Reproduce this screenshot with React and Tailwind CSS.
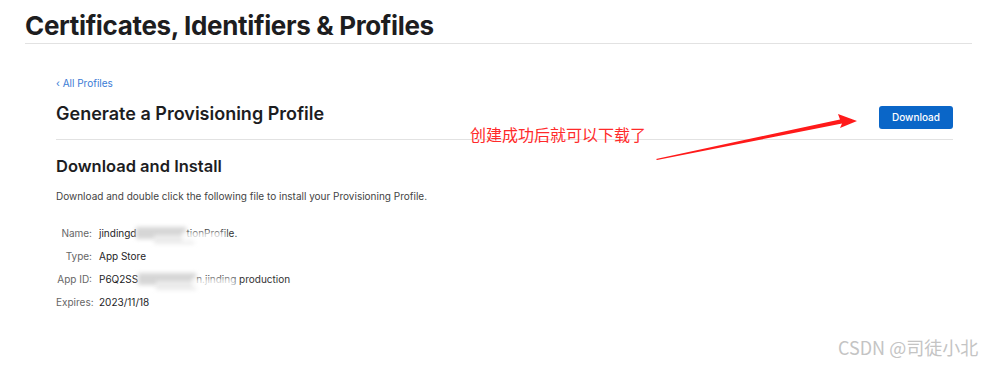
import React from "react";

const rows = [
  { label: "Name:", pre: "jindingd", blur: 50, post: "tionProfile." },
  { label: "Type:", pre: "App Store" },
  { label: "App ID:", pre: "P6Q2SS", blur: 58, post: "n.jinding production" },
  { label: "Expires:", pre: "2023/11/18" },
];

// smudged-out part of the value, like the screenshot's mosaic
const Blur = ({ width }) => (
  <span className="relative inline-block h-[14px] align-middle" style={{ width }}>
    <span className="absolute left-0 top-[1px] h-[12px] w-full bg-[#d6d6d6] blur-[2px]" />
    <span className="absolute left-[18px] top-[9px] h-[9px] w-[40px] bg-[#ebebeb] blur-[2px]" />
  </span>
);

const App = () => {
  return (
    <div
      className="relative w-[987px] h-[365px] overflow-hidden bg-white text-[#1d1d1f]"
      style={{ fontFamily: "Inter, 'Noto Sans', sans-serif" }}
    >
      <div className="pl-[25px] pr-[15px] pt-[10px]">
        <h1 className="text-[26px] leading-[32px] font-bold tracking-[-0.35px] text-[#1d1d1f]">
          Certificates, Identifiers &amp; Profiles
        </h1>
        <div className="mt-[1px] h-px bg-[#e2e2e2]" />
      </div>

      <div className="pl-[56px] pr-[34px] pt-[25px]">
        <a className="text-[10px] leading-[14px] text-[#3a7bd5]">‹ All Profiles</a>
        <div className="mt-[9px] flex items-start justify-between">
          <h2 className="text-[18px] leading-[24px] font-semibold">Generate a Provisioning Profile</h2>
          <button className="mt-[4px] h-[23px] w-[74px] rounded-[3px] bg-[#0a66c8] text-[10px] font-medium text-white">
            Download
          </button>
        </div>
        <div className="mt-[10px] h-px bg-[#e2e2e2]" />

        <h3 className="mt-[15px] text-[16.5px] leading-[22px] font-semibold">Download and Install</h3>
        <p className="mt-[12px] text-[10px] leading-[14px] text-[#444]">
          Download and double click the following file to install your Provisioning Profile.
        </p>

        <div className="mt-[23px] flex flex-col gap-[9px]">
          {rows.map((r) => (
            <div key={r.label} className="flex items-center text-[10px] leading-[14px]">
              <span className="w-[36px] text-right text-[#666]">{r.label}</span>
              <span className="ml-[7px] flex items-center text-[#1d1d1f]">
                {r.pre}
                {r.blur && <Blur width={r.blur} />}
                {r.post && (
                  <span className="relative text-[#333]">
                    {r.post}
                    <span className="absolute left-[-4px] top-[6px] h-[10px] w-[44px] bg-white/80 blur-[2px]" />
                  </span>
                )}
              </span>
            </div>
          ))}
        </div>
      </div>

      {/* annotation */}
      <div
        className="absolute left-[470px] top-[123px] text-[16px] leading-[22px] text-[#ff2a2a]"
        style={{ fontFamily: "'Noto Sans CJK SC', sans-serif" }}
      >
        创建成功后就可以下载了
      </div>
      <svg className="absolute left-0 top-0" width="987" height="365" viewBox="0 0 987 365">
        <polygon
          points="657,160 842,123.5 840,128 857,121 838,114 840,119.5 656,159"
          fill="#ff1a1a"
        />
      </svg>

      <div
        className="absolute left-[838px] top-[336px] text-[18px] leading-[22px] text-[#c4c4c4]"
        style={{ fontFamily: "'Noto Sans CJK SC', sans-serif" }}
      >
        CSDN @司徒小北
      </div>
    </div>
  );
};

export default App;
